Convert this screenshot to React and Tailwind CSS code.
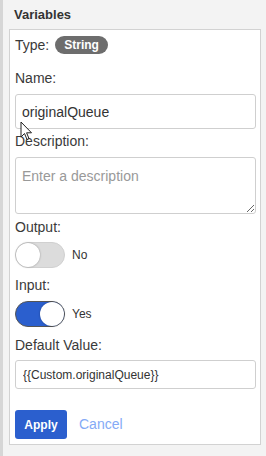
import React, { useState } from 'react'

function Toggle({ on, onChange }) {
  return (
    <button
      type="button"
      onClick={() => onChange(!on)}
      className={`relative block w-[50px] h-[26px] rounded-full border ${on ? 'bg-[#2b5fce] border-[#555]' : 'bg-[#dcdcdc] border-[#d0d0d0]'}`}
    >
      <span
        className={`absolute top-[0px] w-[24px] h-[24px] rounded-full bg-white shadow-[0_0_2px_rgba(0,0,0,0.35)] ${on ? 'left-[24px]' : 'left-[0px]'}`}
      />
    </button>
  )
}

export default function App() {
  const [name, setName] = useState('originalQueue')
  const [output, setOutput] = useState(false)
  const [input, setInput] = useState(true)

  return (
    <div className="w-[266px] h-[456px] bg-[#f3f3f3] border-l-[3px] border-[#d6d6d6] font-['Liberation_Sans',Arial,sans-serif] text-[#3a3a3a] relative">
      <div className="h-[29px] pl-[11px] pt-[5px] text-[13px] font-bold text-[#333]">Variables</div>
      <div className="ml-[6px] w-[252px] h-[416px] bg-white border border-[#d2d2d2] px-[5px] pt-[6px]">
        <div className="flex items-center gap-[6px] h-[18px]">
          <span className="text-[14px]">Type:</span>
          <span className="bg-[#6d6d6d] text-white text-[12px] font-bold rounded-full px-[9px] h-[18px] leading-[18px]">String</span>
        </div>

        <div className="mt-[16px] text-[14px] leading-[16px]">Name:</div>
        <input
          value={name}
          onChange={(e) => setName(e.target.value)}
          className="block mt-[8px] w-[241px] h-[35px] border border-[#cfcfcf] rounded-[3px] px-[6px] text-[14px] text-[#333] outline-none"
        />

        <div className="mt-[4px] text-[14px] leading-[16px]">Description:</div>
        <textarea
          placeholder="Enter a description"
          className="block mt-[8px] w-[241px] h-[57px] border border-[#cfcfcf] rounded-[3px] px-[6px] py-[8px] text-[14px] text-[#333] placeholder-[#999] outline-none"
        />

        <div className="mt-[5px] text-[14px] leading-[16px]">Output:</div>
        <div className="mt-[7px] flex items-center gap-[7px]">
          <Toggle on={output} onChange={setOutput} />
          <span className="text-[12px] text-[#333]">{output ? 'Yes' : 'No'}</span>
        </div>

        <div className="mt-[9px] text-[14px] leading-[16px]">Input:</div>
        <div className="mt-[8px] flex items-center gap-[7px]">
          <Toggle on={input} onChange={setInput} />
          <span className="text-[12px] text-[#333]">{input ? 'Yes' : 'No'}</span>
        </div>

        <div className="mt-[10px] text-[14px] leading-[16px]">Default Value:</div>
        <input
          defaultValue="{{Custom.originalQueue}}"
          className="block mt-[7px] w-[241px] h-[29px] border border-[#cfcfcf] rounded-[3px] px-[7px] text-[12px] text-[#333] outline-none"
        />

        <div className="mt-[21px] flex items-center gap-[12px]">
          <button type="button" className="w-[52px] h-[29px] rounded-[3px] bg-[#2b5fce] text-white text-[12px] font-bold">Apply</button>
          <button type="button" className="text-[14px] text-[#84aaf6]">Cancel</button>
        </div>
      </div>

      {/* mouse pointer */}
      <svg className="absolute left-[17px] top-[121px]" width="14" height="20" viewBox="0 0 14 20">
        <path d="M1 1 L1 16 L4.5 12.5 L7 18.5 L9 17.6 L6.6 11.8 L11.5 11.8 Z" fill="white" stroke="#222" strokeWidth="1" strokeLinejoin="round" />
      </svg>
    </div>
  )
}
